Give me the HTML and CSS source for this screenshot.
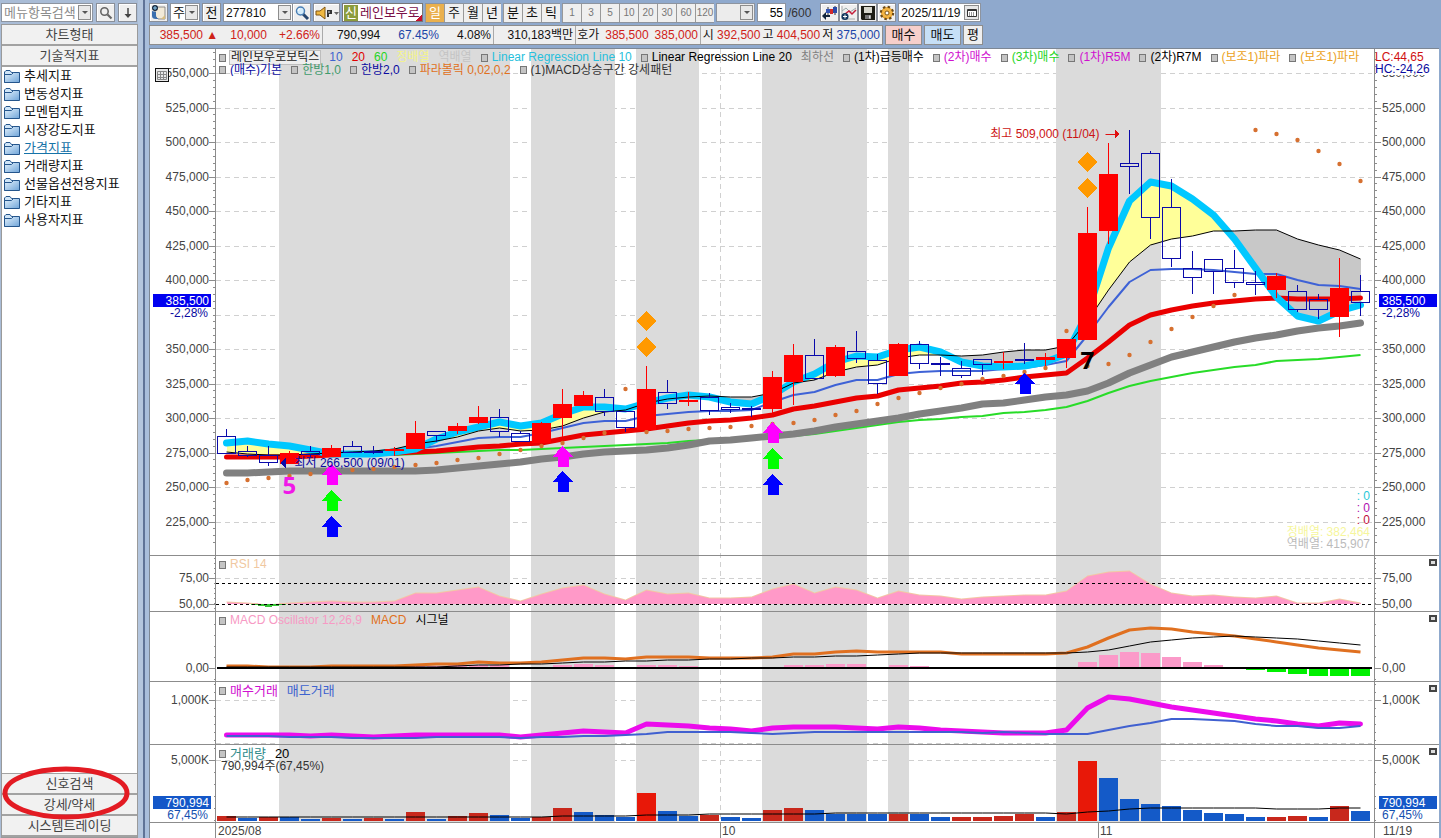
FILE: index.html
```html
<!DOCTYPE html>
<html lang="ko">
<head>
    <meta charset="utf-8">
    <title>종합차트</title>
    <link rel="stylesheet" href="styles.css">
</head>
<body>
    <svg class="symbols" width="0" height="0">
        <defs>
            <linearGradient id="folder-fill" x1="0" y1="0" x2="1" y2="1"><stop offset="0" stop-color="#e4f2fd"/><stop offset="1" stop-color="#6fa4d8"/></linearGradient>
        </defs>
        <symbol id="folder" viewBox="0 0 16 13"><path d="M.5 12.500V2L2 .5h4L7.500 2.500h3" fill="#cfe5f8" stroke="#24558c"/><path d="M.5 4.500h7l2-2h6v10H.5z" fill="url(#folder-fill)" stroke="#24558c"/></symbol>
    </svg>
    <div class="app">
        <aside class="sidebar">
            <form class="menu-search">
                <div class="combo combo-menu">
                    <input type="text" class="combo-input" placeholder="메뉴항목검색" aria-label="메뉴항목검색">
                    <button type="button" class="arrow-btn" aria-label="목록"></button>
                </div>
                <button type="button" class="tool-btn" aria-label="검색">
                    <svg width="14" height="14" viewBox="0 0 14 14"><circle cx="5.500" cy="5.500" r="3.700" fill="none" stroke="#666" stroke-width="1.600"/><path d="M8.500 8.500l4 4" stroke="#666" stroke-width="2.200"/></svg>
                </button>
                <button type="button" class="tool-btn" aria-label="아래로">
                    <svg width="12" height="14" viewBox="0 0 12 14"><path d="M6 2v7" stroke="#444" stroke-width="1.500"/><path d="M2.500 8h7L6 12z" fill="#444"/></svg>
                </button>
            </form>
            <nav class="menu">
                <button type="button" class="menu-tab">차트형태</button>
                <button type="button" class="menu-tab">기술적지표</button>
                <ul class="folders">
                    <li><svg><use href="#folder"/></svg><a href="#">추세지표</a></li>
                    <li><svg><use href="#folder"/></svg><a href="#">변동성지표</a></li>
                    <li><svg><use href="#folder"/></svg><a href="#">모멘텀지표</a></li>
                    <li><svg><use href="#folder"/></svg><a href="#">시장강도지표</a></li>
                    <li><svg><use href="#folder"/></svg><a href="#" class="active">가격지표</a></li>
                    <li><svg><use href="#folder"/></svg><a href="#">거래량지표</a></li>
                    <li><svg><use href="#folder"/></svg><a href="#">선물옵션전용지표</a></li>
                    <li><svg><use href="#folder"/></svg><a href="#">기타지표</a></li>
                    <li><svg><use href="#folder"/></svg><a href="#">사용자지표</a></li>
                </ul>
                <div class="menu-bottom">
                    <button type="button" class="menu-tab">신호검색</button>
                    <button type="button" class="menu-tab">강세/약세</button>
                    <button type="button" class="menu-tab">시스템트레이딩</button>
                    <svg class="circle-mark" width="130" height="56" viewBox="0 0 130 56"><ellipse cx="64" cy="28" rx="61" ry="24" fill="none" stroke="#e31b23" stroke-width="5"/></svg>
                </div>
            </nav>
        </aside>

        <div class="splitter"></div>

        <main class="main">
            <div class="toolbar">
                <button type="button" class="tool-btn" aria-label="종목">
                    <svg width="17" height="17" viewBox="0 0 17 17"><path d="M5 3h10v12h-7l-3-3z" fill="#f2ead8" stroke="#777" stroke-width=".8"/><path d="M2 7v5q0 3 4 3h3q-3-1-3-4V8z" fill="#3a6fae"/><path d="M11 15l4-4v4z" fill="#d8bd80"/><circle cx="5" cy="4" r="3" fill="#15273d"/><path d="M3 4h4M5 2v4" stroke="#8ecbf0" stroke-width="1"/></svg>
                </button>
                <div class="combo combo-unit">
                    <select aria-label="구분"><option>주</option></select>
                    <span class="arrow-btn"></span>
                </div>
                <button type="button" class="tool-btn">전</button>
                <div class="combo combo-code">
                    <input type="text" class="combo-input" value="277810" aria-label="종목코드">
                    <button type="button" class="arrow-btn" aria-label="목록"></button>
                    <button type="button" class="tool-btn flat" aria-label="종목검색">
                        <svg width="16" height="16" viewBox="0 0 16 16"><path d="M9 9l5 5" stroke="#26466e" stroke-width="3"/><circle cx="6.500" cy="6" r="4" fill="#d4ecfb" stroke="#4a7fb5" stroke-width="1.500"/><path d="M4 6q0-2 2-2.500" stroke="#fff" fill="none"/></svg>
                    </button>
                </div>
                <button type="button" class="tool-btn speaker" aria-label="소리">
                    <svg width="24" height="16" viewBox="0 0 24 16"><path d="M1 6h4l5-4v12l-5-4H1z" fill="#f0b840" stroke="#805510"/><path d="M12 5h5v4h-3v3h-2z" fill="#333"/><path d="M13 7h2" stroke="#ddd"/><path d="M19 7h5l-2.500 3z" fill="#666"/></svg>
                </button>
                <button type="button" class="stock-name"><span class="credit">신</span>레인보우로</button>
                <div class="btn-group">
                    <button type="button" class="active">일</button><button type="button">주</button><button type="button">월</button><button type="button">년</button>
                </div>
                <div class="btn-group">
                    <button type="button">분</button><button type="button">초</button><button type="button">틱</button>
                </div>
                <div class="btn-group numbers">
                    <button type="button">1</button><button type="button">3</button><button type="button">5</button><button type="button">10</button><button type="button">20</button><button type="button">30</button><button type="button">60</button><button type="button">120</button>
                </div>
                <div class="combo combo-blank">
                    <select aria-label="주기" disabled><option></option></select>
                    <span class="arrow-btn"></span>
                </div>
                <label class="count"><input type="text" value="55" aria-label="봉 개수">/600</label>
                <div class="icon-group">
                    <button type="button" class="tool-btn" aria-label="캔들">
                        <svg width="17" height="16" viewBox="0 0 17 16"><path d="M7 2v9M14 1v9" stroke="#333"/><path d="M5 4h4v4H5z" fill="#3355b5"/><path d="M12 2h4v6h-4z" fill="#2c4ba8"/><path d="M9 4h3v5H9z" fill="#d32a2a"/><path d="M1 11l4-4v3h4v2H5v3z" fill="#10243c"/></svg>
                    </button>
                    <button type="button" class="tool-btn" aria-label="지표">
                        <svg width="17" height="16" viewBox="0 0 17 16"><path d="M2 1v13h13" stroke="#aaa" fill="none"/><path d="M2 6l4-3 4 4 6-4" stroke="#9aa" fill="none"/><path d="M5 9l4-3 3 3 4-4" stroke="#c41d3a" stroke-width="1.500" fill="none"/><circle cx="5" cy="11.500" r="3.500" fill="#14385e"/><path d="M3 11.500h4M5 9.500v4" stroke="#fff"/></svg>
                    </button>
                    <button type="button" class="tool-btn" aria-label="저장">
                        <svg width="16" height="16" viewBox="0 0 16 16"><path d="M1 1h14v14H2l-1-1z" fill="#1c1c14"/><path d="M4 2h8v6H4z" fill="#d6d6cc"/><path d="M5 10h6v4H5z" fill="#777"/><path d="M9 10.500h1.500v3H9z" fill="#ddd"/></svg>
                    </button>
                    <button type="button" class="tool-btn" aria-label="설정">
                        <svg width="16" height="16" viewBox="0 0 16 16"><circle cx="8" cy="8" r="6" fill="#f0a830" stroke="#6b4a18" stroke-width="2.400" stroke-dasharray="2.400 2.300"/><circle cx="8" cy="8" r="5" fill="#f3b545"/><circle cx="8" cy="8" r="2" fill="#fff" stroke="#7c5418"/></svg>
                    </button>
                </div>
                <div class="combo combo-date">
                    <input type="text" class="combo-input" value="2025/11/19" aria-label="날짜">
                    <button type="button" class="arrow-btn calendar" aria-label="달력">
                        <svg width="10" height="10" viewBox="0 0 10 10"><path d="M.5 1.500h9v7h-9z" fill="#fff" stroke="#333"/><path d="M1 2.500h8" stroke="#333"/><path d="M2 5h6M2 7h6" stroke="#333" stroke-dasharray="1 1"/></svg>
                    </button>
                </div>
            </div>

            <div class="quotebar">
                <div class="quotes">
                    <div class="cell cell-price up"><span>385,500 ▲</span><span>10,000</span><span>+2.66%</span></div>
                    <div class="cell cell-volume"><span>790,994</span><span class="down">67.45%</span><span>4.08%</span></div>
                    <div class="cell cell-amount">310,183백만</div>
                    <div class="cell cell-ask"><span>호가</span><span class="up">385,500</span><span class="up">385,000</span></div>
                    <div class="cell cell-ohl"><span>시 <b class="up">392,500</b></span><span>고 <b class="up">404,500</b></span><span>저 <b class="down">375,000</b></span></div>
                </div>
                <button type="button" class="order-btn buy">매수</button>
                <button type="button" class="order-btn sell">매도</button>
                <button type="button" class="order-btn avg">평</button>
            </div>

            <section class="chart" id="chart">
                <svg class="plot" id="plot"></svg>
                <div class="pane pane-price">
                    <div class="legend">
                        <div class="legend-row">
                            <span class="item"><em class="title">레인보우로보틱스</em></span>
                            <span class="c-blue">10</span><span class="c-red">20</span><span class="c-lime">60</span>
                            <span class="c-yellow">정배열</span><span class="c-silver">역배열</span>
                            <span class="item c-cyan">Linear Regression Line 10</span>
                            <span class="item c-black">Linear Regression Line 20</span>
                            <span class="c-gray">최하선</span>
                            <span class="item c-black">(1차)급등매수</span>
                            <span class="item c-magenta">(2차)매수</span>
                            <span class="item c-lime">(3차)매수</span>
                            <span class="item c-magenta">(1차)R5M</span>
                            <span class="item c-black">(2차)R7M</span>
                            <span class="item c-orange">(보조1)파라</span>
                            <span class="item c-orange">(보조1)파라</span>
                        </div>
                        <div class="legend-row second">
                            <span class="item c-navy">(매수)기본</span>
                            <span class="item c-green">한방1,0</span>
                            <span class="item c-navy">한방2,0</span>
                            <span class="item c-brown">파라볼릭 0,02,0,2</span>
                            <span class="item c-dark">(1)MACD상승구간 강세패턴</span>
                        </div>
                    </div>
                </div>
                <div class="pane pane-rsi">
                    <div class="legend"><div class="legend-row"><span class="item c-peach">RSI 14</span></div></div>
                    <button type="button" class="pane-close" aria-label="닫기"></button>
                </div>
                <div class="pane pane-macd">
                    <div class="legend"><div class="legend-row"><span class="item c-pink">MACD Oscillator 12,26,9</span><span class="c-brown">MACD</span><span class="c-black">시그널</span></div></div>
                    <button type="button" class="pane-close" aria-label="닫기"></button>
                </div>
                <div class="pane pane-trade">
                    <div class="legend"><div class="legend-row"><span class="item c-magenta">매수거래</span><span class="c-blue">매도거래</span></div></div>
                    <button type="button" class="pane-close" aria-label="닫기"></button>
                </div>
                <div class="pane pane-volume">
                    <div class="legend">
                        <div class="legend-row"><span class="item c-teal">거래량</span><span class="c-black">20</span></div>
                        <div class="legend-row c-dark small">790,994주(67,45%)</div>
                    </div>
                    <button type="button" class="pane-close" aria-label="닫기"></button>
                </div>
                <div class="pane-dates"></div>
            </section>
        </main>
    </div>
    <script src="chart.js"></script>
</body>
</html>
```

FILE: styles.css
```css
* {
    box-sizing: border-box;
}
body {
    margin: 0;
    background: #8fa9cd;
    color: #111;
    font-family: "Liberation Sans", "Noto Sans CJK KR", sans-serif;
    font-size: 12px;
    line-height: 14px;
}
button, input, select {
    font: inherit;
    color: inherit;
    margin: 0;
    padding: 0;
    border-radius: 0;
}
.symbols {
    display: block;
}
.app {
    display: flex;
    min-height: 100vh;
}

/* sidebar */
.sidebar {
    display: flex;
    flex-direction: column;
    width: 138px;
    flex-shrink: 0;
    background: #a9bcd6;
}
.menu-search {
    display: flex;
    gap: 3px;
    padding: 3px 1px 2px 1px;
    font-size: 13px;
}
.menu {
    display: flex;
    flex-direction: column;
    flex: 1;
    margin-left: 1px;
    border: 1px solid #9a9a9a;
    background: white;
}
.menu-tab {
    display: block;
    width: 100%;
    height: 21px;
    border: none;
    border-bottom: 2px solid #a2a2a2;
    background: #f1f1f1;
    color: #444;
    font-size: 13px;
    text-align: center;
}
.folders {
    flex: 1;
    list-style: none;
    margin: 0;
    padding: 0 2px;
}
.folders li {
    display: flex;
    align-items: center;
    gap: 4px;
    height: 18px;
    font-size: 13px;
}
.folders svg {
    width: 16px;
    height: 13px;
}
.folders a {
    color: #111;
    text-decoration: none;
}
.folders a.active {
    color: #1673a8;
    text-decoration: underline;
}
.menu-bottom {
    position: relative;
    border-top: 1px solid #a2a2a2;
}
.circle-mark {
    position: absolute;
    left: 0;
    top: -9px;
    pointer-events: none;
}
.splitter {
    width: 11px;
    flex-shrink: 0;
    background: #b4c6de;
    border-right: 4px solid #a9bedb;
    box-shadow: inset -2px 0 0 #5f7397;
}
.main {
    display: flex;
    flex-direction: column;
    flex: 1;
    min-width: 0;
}

/* toolbar */
.toolbar {
    display: flex;
    align-items: center;
    gap: 2px;
    height: 25px;
    white-space: nowrap;
    font-size: 13px;
}
.toolbar > * {
    flex-shrink: 0;
}
.tool-btn {
    display: flex;
    align-items: center;
    justify-content: center;
    width: 19px;
    height: 19px;
    border: 1px solid #8a8f98;
    background: #efefef;
    box-shadow: inset 1px 1px 0 white;
    flex-shrink: 0;
}
.tool-btn.speaker {
    width: 27px;
}
.combo {
    display: flex;
    align-items: center;
    height: 19px;
    border: 1px solid #8d949f;
    background: white;
}
.combo-input, .combo select {
    flex: 1;
    min-width: 0;
    height: 16px;
    border: none;
    outline: none;
    background: transparent;
    appearance: none;
    padding-left: 2px;
}
.combo-input::placeholder {
    color: #8c8c8c;
    opacity: 1;
}
.combo-menu {
    flex: 1;
    min-width: 0;
}
.combo-unit {
    width: 30px;
}
.combo-code {
    width: 88px;
    font-size: 12px;
}
.combo-blank {
    width: 39px;
    background: #ececec;
}
.combo-date {
    width: 83px;
    font-size: 12px;
}
.arrow-btn {
    display: flex;
    align-items: center;
    justify-content: center;
    width: 13px;
    height: 15px;
    margin-right: 1px;
    border: 1px solid #8d8d8d;
    background: #e8e8e8;
    flex-shrink: 0;
    pointer-events: none;
}
.arrow-btn::before {
    content: "";
    border: 3px solid transparent;
    border-top-color: #555;
    border-bottom-width: 0;
}
.arrow-btn.calendar {
    width: 15px;
}
.calendar::before {
    display: none;
}
.tool-btn.flat {
    width: 18px;
    height: 17px;
    border-width: 0 0 0 1px;
}
.stock-name {
    display: flex;
    align-items: center;
    width: 81px;
    height: 19px;
    border: 1px solid #777;
    background: linear-gradient(135deg, transparent 93%, #c8102e 93%) white;
    color: #7a1048;
    overflow: hidden;
}
.credit {
    margin: 0 2px 0 1px;
    padding: 0 1px;
    background: #8c9c3c;
    color: white;
    line-height: 16px;
}
.btn-group {
    display: flex;
    border: solid #8d949f;
    border-width: 1px 0;
}
.btn-group button {
    width: 19px;
    height: 18px;
    border: none;
    border-left: 1px solid #999;
    background: #efefef;
    text-align: center;
}
.btn-group .active {
    background: #eab04d;
    color: white;
}
.numbers {
    color: #777;
    font-size: 10px;
}
.count {
    color: #333;
    font-size: 12px;
}
.count input {
    width: 29px;
    height: 19px;
    margin-right: 2px;
    padding-right: 2px;
    border: 1px solid #8d949f;
    background: white;
    color: #000;
    text-align: right;
}
.icon-group {
    display: flex;
    margin-left: 7px;
}

/* quote bar */
.quotebar {
    display: flex;
    gap: 2px;
    height: 20px;
    margin-bottom: 3px;
    white-space: nowrap;
}
.quotes {
    display: flex;
    border: 1px solid #8d8d8d;
    background: #efefef;
    line-height: 18px;
}
.cell {
    display: flex;
    justify-content: flex-end;
    gap: 12px;
    padding: 0 2px;
    border-left: 1px solid #aaa;
}
.cell:first-child {
    border-left: none;
}
.cell b {
    font-weight: normal;
}
.cell-price {
    width: 172px;
}
.cell-volume {
    width: 171px;
    gap: 18px;
}
.cell-amount {
    width: 82px;
}
.cell-ask {
    width: 125px;
    gap: 6px;
}
.cell-ohl {
    width: 182px;
    gap: 2px;
}
.up {
    color: #cf2218;
}
.down {
    color: #1c45a8;
}
.order-btn {
    width: 37px;
    border: 1px solid #8d8d8d;
    background: #efefef;
    font-size: 13px;
}
.buy {
    background: #f7cfcb;
}
.sell {
    background: #c6dff6;
}
.avg {
    width: 20px;
}

/* chart */
.chart {
    position: relative;
    flex: 1;
    margin-right: 2px;
    border-top: 1px solid #7d8794;
    border-left: 1px solid #7d8794;
    background: white;
}
.plot {
    position: absolute;
    left: 0;
    top: 0;
    width: 100%;
    height: 789px;
}
.plot text {
    fill: #444;
    font-size: 12px;
}
.plot .end {
    text-anchor: end;
}
.plot .mark {
    font-family: "Open Sans", sans-serif;
    font-size: 24px;
    font-weight: bold;
}
.pane {
    position: relative;
    display: flex;
    justify-content: space-between;
    align-items: flex-start;
    border-bottom: 1px solid #8c8c8c;
    padding-left: 69px;
}
.pane-price {
    height: 507px;
    padding-right: 66px;
}
.pane-rsi {
    height: 56px;
}
.pane-macd {
    height: 70px;
}
.pane-trade {
    height: 63px;
}
.pane-volume {
    height: 78px;
}
.pane-dates {
    height: 15px;
}
.legend {
    flex: 1;
    min-width: 0;
    padding-top: 2px;
    font-size: 13px;
    line-height: 13px;
    overflow: hidden;
}
.pane-price .legend, .pane-rsi .legend, .pane-macd .legend {
    font-size: 12px;
}
.legend-row {
    display: flex;
    gap: 9px;
    white-space: nowrap;
}
.legend-row.second {
    line-height: 12px;
}
.legend-row.small {
    padding-left: 2px;
    font-size: 12px;
}
.item {
    display: flex;
    align-items: center;
}
.item::before {
    content: "";
    width: 5px;
    height: 6px;
    margin-right: 4px;
    border: 1px solid #777;
    background: #c4c4c4;
}
.title {
    padding: 0 1px;
    outline: 1px solid #bdbdbd;
    background: #eee;
    color: #222;
    font-style: normal;
}
.pane-close {
    width: 8px;
    height: 7px;
    margin: 3px 2px 0 0;
    border: 2px solid #444;
    background: #ddd;
}
.c-blue { color: #3e63cf; }
.c-red { color: #e00000; }
.c-lime { color: #25d525; }
.c-yellow { color: #f4f48a; }
.c-silver { color: #c4c4c4; }
.c-cyan { color: #28bfdc; }
.c-black { color: #000; }
.c-gray { color: #808080; }
.c-magenta { color: #d010d0; }
.c-orange { color: #eba21c; }
.c-navy { color: #0a0aa0; }
.c-green { color: #3f9a6c; }
.c-brown { color: #e07020; }
.c-dark { color: #333; }
.c-peach { color: #f0c8a0; }
.c-pink { color: #f79ac4; }
.c-teal { color: #2e8b8b; }
```

FILE: chart.js
```js
const svg = document.getElementById('plot');
const chart = document.getElementById('chart');

const TOP = 49;          // all y values below count from the window top
const BOTTOM = 838;
const LEFT_AXIS = 66;
const RIGHT_AXIS = 65;
const COUNT = 55;

// up, high, low, body top, body bottom
const candles = [
    [0,429,454,436,453],[0,446,457,451,455],[0,446,466,455,462],[1,451,464,453,464],[0,446,457,451,454],
    [1,445,456,448,457],[0,441,452,446,452],[0,446,454,451,451],[1,447,456,449,449],[1,421,449,433,449],
    [0,431,442,431,435],[1,423,434,426,431],[1,406,424,417,423],[0,409,437,417,431],[0,431,441,433,441],
    [1,422,443,423,443],[1,389,437,404,418],[1,391,406,395,406],[0,389,416,397,411],[0,411,432,411,427],
    [1,366,430,389,430],[0,380,409,392,403],[1,392,406,400,402],[0,393,415,397,410],[0,403,413,407,409],
    [0,406,417,408,408],[1,371,413,377,409],[1,344,405,355,382],[0,339,380,355,378],[1,345,377,347,376],
    [0,331,363,351,358],[0,354,394,360,383],[1,343,376,344,376],[0,341,369,344,363],[0,357,376,363,363],
    [0,361,378,368,375],[0,359,375,359,364],[1,352,369,361,361],[0,343,364,359,359],[1,353,366,357,360],
    [1,339,368,339,358],[1,207,340,233,340],[1,143,244,174,231],[0,130,194,163,166],[0,151,239,153,217],
    [0,179,267,207,258],[0,251,294,268,277],[0,259,294,259,271],[0,250,288,268,282],[0,271,295,282,284],
    [1,273,298,276,290],[0,285,312,291,309],[0,294,319,299,309],[1,258,337,288,317],[0,275,316,291,302]
];
const volumes = [
    [1,816],[0,818],[1,817],[0,817],[0,819],[1,818],[0,819],[1,818],[0,819],[1,812],[0,819],
    [1,816],[1,813],[0,815],[0,818],[1,817],[1,808],[0,812],[0,815],[0,817],[1,793],[0,811],
    [0,816],[1,815],[0,817],[0,818],[1,810],[1,808],[0,810],[0,814],[0,814],[0,814],[1,814],
    [0,814],[0,817],[1,817],[1,817],[1,816],[1,814],[0,817],[1,812],[1,761],[0,778],[0,799],
    [0,804],[0,806],[0,810],[0,813],[0,814],[0,817],[1,817],[1,816],[0,817],[1,806],[0,811]
];
const lrl10 = [443,441,444,446,450,454,454,454,452,449,439,432,427,422,426,423,414,407,407,409,403,398,395,397,402,404,395,382,374,362,356,357,350,347,352,362,366,367,366,362,354,313,248,201,182,186,199,215,239,268,297,316,321,311,305];
const lrl20 = [452,454,455,455,454,453,452,451,449,444,441,437,431,428,431,430,426,418,412,410,403,399,397,396,397,397,393,383,380,372,367,365,358,355,355,356,355,352,350,350,346,321,290,262,245,239,236,231,231,230,230,239,245,250,259];
const ma10 = [457,457,457,456,456,455,454,453,452,449,446,442,438,437,437,433,428,423,421,421,416,414,412,411,411,410,402,395,392,385,380,380,374,372,371,371,371,369,368,365,361,335,307,282,270,269,269,270,272,274,274,280,285,286,289];
const ma20 = [457,457,457,457,456,455,454,454,453,452,451,449,447,446,444,443,439,435,433,431,429,426,423,421,420,418,415,409,406,402,398,396,390,388,386,383,382,380,377,375,373,358,342,325,315,310,306,303,301,299,298,299,299,299,298];
const ma60 = [457,457,457,457,456,456,456,455,455,454,453,452,451,450,450,449,448,447,446,445,444,443,441,440,438,438,437,436,434,431,428,425,422,420,419,417,416,413,412,410,407,401,393,386,381,377,373,370,367,365,361,360,359,357,355];
const lowest = [473,473,472,471,471,471,471,471,471,471,470,468,466,464,462,459,457,454,452,451,450,448,445,441,440,438,436,434,431,427,424,421,418,414,411,408,404,403,400,397,395,391,383,373,365,357,352,347,342,338,335,331,328,326,323];
const parabolic = [483,480,478,476,474,472,470,469,467,465,463,460,458,454,450,446,443,438,433,389,432,431,429,428,427,426,424,423,420,415,411,404,398,393,388,384,379,376,372,368,331,366,364,355,342,329,317,306,295,130,134,140,151,164,181];
const rsi = [602,603,605,603,602,601,602,602,601,593,593,590,587,596,601,594,588,585,594,600,590,594,593,598,598,597,589,584,593,587,590,598,591,595,596,599,597,596,595,595,591,576,572,571,584,593,596,595,597,598,596,603,603,599,603];
const macd = [666,666,667,667,667,666,666,666,666,665,664,664,662,663,663,662,660,658,658,659,657,657,657,658,658,658,657,654,654,652,651,652,652,652,652,654,654,654,654,654,653,647,638,630,628,629,632,634,636,639,642,645,648,650,652];
const signal = [667,667,667,667,667,667,667,667,667,667,667,666,665,665,664,664,663,662,662,661,661,660,660,659,659,658,658,657,657,656,656,655,654,653,653,653,653,653,653,653,653,652,650,646,642,640,638,637,636,637,638,639,641,643,645];
const buys = [735,735,735,735,736,735,736,737,736,735,735,735,735,735,737,735,733,731,732,733,724,725,726,728,729,731,728,727,727,727,728,729,727,728,730,731,732,733,733,733,730,708,697,699,703,707,710,713,716,719,721,724,726,723,724];
const sells = [736,736,736,737,737,737,738,738,738,738,737,737,737,737,738,737,737,736,736,735,734,732,732,732,732,733,734,733,732,732,732,732,732,732,732,732,733,732,733,734,734,734,730,726,723,719,719,720,721,724,726,726,728,728,726];
const volMa = [817,817,817,817,817,817,817,817,817,817,817,817,817,817,817,817,816,816,816,816,815,815,815,814,814,814,814,814,814,813,813,813,813,813,813,813,813,813,813,813,814,812,811,809,808,808,808,808,808,808,809,809,809,808,808];
const osc = {9:666,10:666,11:665,12:665,13:665,16:665,17:664,18:665,20:665,21:665,22:666,27:665,28:665,29:664,30:664,32:665,33:666,41:662,42:655,43:652,44:653,45:657,46:662,47:665,49:670,50:672,51:674,52:676,53:676,54:676};

// first and last bar of every shaded stretch
const bands = [[3,13],[15,18],[20,22],[26,30],[32,32],[40,44]];

let out = [];
function rect(x, y, w, h, fill, extra) {
    out.push(`<rect x="${x}" y="${y}" width="${w}" height="${h}" fill="${fill}" ${extra || ''}/>`);
}
function line(x1, y1, x2, y2, color, extra) {
    out.push(`<path d="M${x1} ${y1}L${x2} ${y2}" stroke="${color}" fill="none" ${extra || ''}/>`);
}
function text(x, y, str, color, cls) {
    out.push(`<text x="${x}" y="${y}" class="${cls || ''}" style="fill:${color || '#444'}">${str}</text>`);
}
function poly(points, fill) {
    out.push(`<polygon points="${points.join(' ')}" fill="${fill}" shape-rendering="crispEdges"/>`);
}

function draw() {
    const W = chart.clientWidth;
    const right = W - RIGHT_AXIS;
    const step = (right - LEFT_AXIS - 3) / COUNT;
    const slot = i => Math.round(LEFT_AXIS + i * step);
    const cx = i => slot(i) + 10.5;
    const bw = Math.round(step) - 3;
    const series = (data, color, width, from) => {
        const pts = data.map((y, i) => `${cx(i)},${y}`).slice(from || 0);
        out.push(`<polyline points="${pts.join(' ')}" fill="none" stroke="${color}" stroke-width="${width}" stroke-linejoin="round" ${width > 4 ? 'stroke-linecap="round"' : ''}/>`);
    };
    out = [];
    svg.setAttribute('viewBox', `0 ${TOP} ${W} ${BOTTOM - TOP}`);

    // grid and shaded stretches
    const dash = 'stroke-dasharray="5 4"';
    for (let k = 0; k < 14; k++) {
        const y = Math.round(73 + k * 34.5) + 0.5;
        line(LEFT_AXIS, y, right - 2, y, '#d0d0d0', dash);
    }
    [578.5, 700.5, 743.5, 760.5].forEach(y => line(LEFT_AXIS, y, right - 2, y, '#d0d0d0', dash));
    [24, 42].forEach(i => line(slot(i) + 0.5, TOP, slot(i) + 0.5, 822, '#d0d0d0', dash));
    bands.forEach(([a, b]) => rect(slot(a), TOP, slot(b + 1) - slot(a), 773, '#dbdbdb'));

    // cloud between the two regression lines
    for (let i = 0; i < COUNT - 1; i++) {
        const a = lrl20[i] - lrl10[i], b = lrl20[i + 1] - lrl10[i + 1];
        const x1 = cx(i), x2 = cx(i + 1);
        if (a * b >= 0) {
            poly([x1, lrl10[i], x2, lrl10[i + 1], x2, lrl20[i + 1], x1, lrl20[i]], a + b > 0 ? '#ffff99' : '#c8c8c8');
        } else {
            const t = a / (a - b);
            const xm = x1 + (x2 - x1) * t, ym = lrl10[i] + (lrl10[i + 1] - lrl10[i]) * t;
            poly([x1, lrl10[i], xm, ym, x1, lrl20[i]], a > 0 ? '#ffff99' : '#c8c8c8');
            poly([x2, lrl10[i + 1], xm, ym, x2, lrl20[i + 1]], b > 0 ? '#ffff99' : '#c8c8c8');
        }
    }

    series(ma60, '#28dc28', 2, 8);
    series(lowest, '#808080', 7);
    series(ma10, '#3e62d6', 2);
    series(ma20, '#ea0000', 5);
    series(lrl10, '#00c8ff', 7);
    series(lrl20, '#000', 1);
    parabolic.forEach((y, i) => out.push(`<circle cx="${cx(i)}" cy="${y}" r="2.2" fill="#d67030"/>`));

    candles.forEach(([up, high, low, top, bottom], i) => {
        const x = slot(i) + 1, h = bottom - top;
        const color = up ? '#ff0000' : '#0a0aaa';
        if (up || h < 2) {
            line(cx(i), high, cx(i), low, color);
            rect(x, top, bw + 1, Math.max(h, 2), color);
        } else {
            line(cx(i), high, cx(i), top, color);
            line(cx(i), bottom, cx(i), low, color);
            rect(x + 0.5, top + 0.5, bw, h, 'none', `stroke="${color}"`);
        }
    });

    const arrow = (i, y, color) => {
        const x = cx(i);
        poly([x, y, x + 11, y + 11, x + 6, y + 11, x + 6, y + 21, x - 5, y + 21, x - 5, y + 11, x - 10, y + 11], color);
    };
    [[5,464,'#ff00ff'],[5,490,'#00ff00'],[5,516,'#0000ff'],[16,446,'#ff00ff'],[16,471,'#0000ff'],
     [26,422,'#ff00ff'],[26,448,'#00ff00'],[26,474,'#0000ff'],[38,373,'#0000ff']].forEach(a => arrow(...a));
    [[20,321],[20,347],[41,162],[41,188]].forEach(([i, y]) => {
        poly([cx(i), y - 10, cx(i) + 10, y, cx(i), y + 10, cx(i) - 10, y], '#ff9900');
    });
    text(cx(3) - 7, 494, '5', '#f018e8', 'mark');
    text(cx(41) - 7, 369, '7', '#000', 'mark');
    text(cx(3) + 5, 467, '최저 266,500 (09/01)', '#0a0aa0');
    poly([cx(3) - 9, 463, cx(3) - 4, 458, cx(3) - 4, 468], '#0a0aaa');
    text(cx(43) - 30, 138, '최고 509,000 (11/04)', '#cc1414', 'end');
    line(cx(43) - 24, 134.5, cx(43) - 14, 134.5, '#e01010');
    poly([cx(43) - 15, 129, cx(43) - 10, 134, cx(43) - 15, 139], '#e01010');

    text(right - 4, 500, ': 0', '#28c8d8', 'end');
    text(right - 4, 512, ': 0', '#b010b0', 'end');
    text(right - 4, 524, ': 0', '#c01040', 'end');
    text(right - 4, 536, '정배열: 382,464', '#f6f69c', 'end');
    text(right - 4, 548, '역배열: 415,907', '#bbb', 'end');

    // RSI
    poly([cx(0), 604, ...rsi.flatMap((y, i) => [cx(i), Math.min(y, 604)]), cx(54), 604], '#ff99c8');
    series(rsi, '#f3c8a4', 1);
    poly([cx(1), 604, cx(2), 607, cx(3), 604], '#35c435');
    line(LEFT_AXIS, 583.5, right - 2, 583.5, '#000', 'stroke-dasharray="3 3"');
    line(LEFT_AXIS, 604.5, right - 2, 604.5, '#000', 'stroke-dasharray="3 3"');

    // MACD
    Object.entries(osc).forEach(([i, y]) => {
        if (y < 668) rect(slot(+i) + 1, y, bw + 1, 668 - y, '#fb9ac9');
        else rect(slot(+i) + 1, 668, bw + 1, y - 668, '#00f000');
    });
    series(macd, '#e07020', 3);
    series(signal, '#000', 1);
    rect(LEFT_AXIS + 1, 667, right - LEFT_AXIS - 3, 2, '#000');

    // buy and sell volume
    series(buys, '#ec0cec', 5);
    series(sells, '#4060d0', 2);

    volumes.forEach(([up, y], i) => rect(slot(i) + 1, y, bw + 1, 821 - y, up ? (y < 800 ? '#e81808' : '#c8281c') : '#145ac8'));
    series(volMa, '#000', 1);

    // axes
    [LEFT_AXIS - 0.5, right + 0.5].forEach(x => line(x, TOP, x, BOTTOM, '#8c8c8c'));
    const ticks = (y, len) => {
        line(LEFT_AXIS - len, y, LEFT_AXIS, y, '#8c8c8c');
        line(right, y, right + len, y, '#8c8c8c');
    };
    const label = (y, str) => {
        ticks(y + 0.5, 7);
        text(LEFT_AXIS - 7, y + 4, str, '#444', 'end');
        text(right + 8, y + 4, str);
    };
    for (let k = -3; k < 69; k++) ticks(Math.round(73 + k * 6.9) + 0.5, 3);
    for (let k = 0; k < 14; k++) {
        // the last price tag covers this one
        if (550 - k * 25 === 375) continue;
        label(Math.round(73 + k * 34.5), `${550 - k * 25},000`);
    }
    for (let y = 558; y < 610; y += 5) ticks(y + 0.5, 2);
    for (let y = 624; y < 680; y += 11) ticks(y + 0.5, 2);
    for (let y = 684; y < 744; y += 8) ticks(y + 0.5, 2);
    for (let y = 748; y < 822; y += 12) ticks(y + 0.5, 2);
    label(578, '75,00');
    label(604, '50,00');
    label(668, '0,00');
    label(700, '1,000K');
    label(760, '5,000K');

    rect(right + 2, TOP + 1, 62, 25, '#fff');
    text(right + 1, 61, 'LC:44,65', '#d01010');
    text(right + 1, 73, 'HC:-24,26', '#0a0aa0');

    [['385,500', '-2,28%', 294, '#0000f0', '#0a0aa0'], ['790,994', '67,45%', 796, '#1457c8', '#1450b0']].forEach(([v, p, y, bg, fg]) => {
        rect(3, y, 58, 13, bg);
        rect(right + 5, y, 58, 13, bg);
        text(LEFT_AXIS - 7, y + 11, v, '#fff', 'end');
        text(right + 8, y + 11, v, '#fff');
        text(LEFT_AXIS - 8, y + 23, p, fg, 'end');
        text(right + 8, y + 23, p, fg);
    });

    // grid button beside the first label
    rect(5.5, 68.5, 13, 13, '#e8e8e8', 'stroke="#111"');
    out.push('<path d="M7.500 71.500h9v8h-9zM8 74.500h9M8 77.500h9M10.500 71v9M13.500 71v9" fill="none" stroke="#888"/>');

    // dates
    [24, 42].forEach(i => line(slot(i) + 0.5, 823, slot(i) + 0.5, BOTTOM, '#8c8c8c'));
    text(LEFT_AXIS + 2, 835, '2025/08');
    text(slot(24) + 2, 835, '10');
    text(slot(42) + 2, 835, '11');
    text(right + 9, 835, '11/19');

    svg.innerHTML = out.join('');
}

draw();
window.addEventListener('resize', draw);
```
